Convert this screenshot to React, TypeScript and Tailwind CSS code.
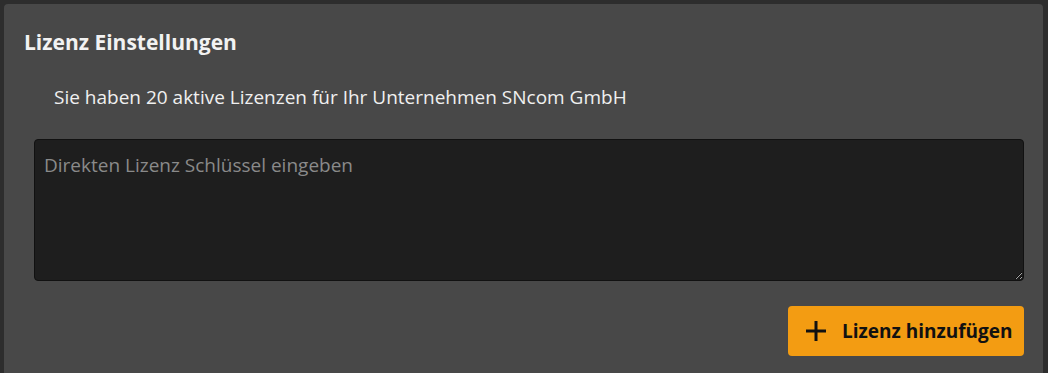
export default function App() {
  return (
    <div className="min-h-screen bg-[#2d2d2d] pt-1 pl-1 pr-[5px] font-['Open_Sans',sans-serif]">
      <div className="rounded-t-[4px] bg-[#484848] pl-5 pr-[19px] pt-6 pb-6 min-h-[369px]">
        {/* Header */}
        <h1 className="text-[21px] leading-[28px] font-bold text-[#f2f2f2]">
          Lizenz Einstellungen
        </h1>
        <p className="mt-[28px] ml-[30px] text-[19px] leading-[26px] text-[#f0f0f0]">
          Sie haben 20 aktive Lizenzen für Ihr Unternehmen SNcom GmbH
        </p>

        {/* Key input */}
        <div className="mt-[29px] ml-[10px]">
          <textarea
            placeholder="Direkten Lizenz Schlüssel eingeben"
            className="block w-full h-[142px] rounded-[4px] border border-[#111] bg-[#1e1e1e] px-[9px] pt-[12px] text-[19px] leading-[26px] text-white placeholder:text-[#8a8a8a] outline-none"
          />
        </div>

        <div className="mt-[25px] flex justify-end">
          <button className="flex h-[50px] w-[236px] items-center gap-[15px] rounded-[4px] bg-[#f39c12] pl-[17px] text-[19px] font-bold text-[#111]">
            <svg width="22" height="22" viewBox="0 0 22 22" fill="none">
              <path d="M11 1v20M1 11h20" stroke="#111" strokeWidth="3" />
            </svg>
            Lizenz hinzufügen
          </button>
        </div>
      </div>
    </div>
  );
}
